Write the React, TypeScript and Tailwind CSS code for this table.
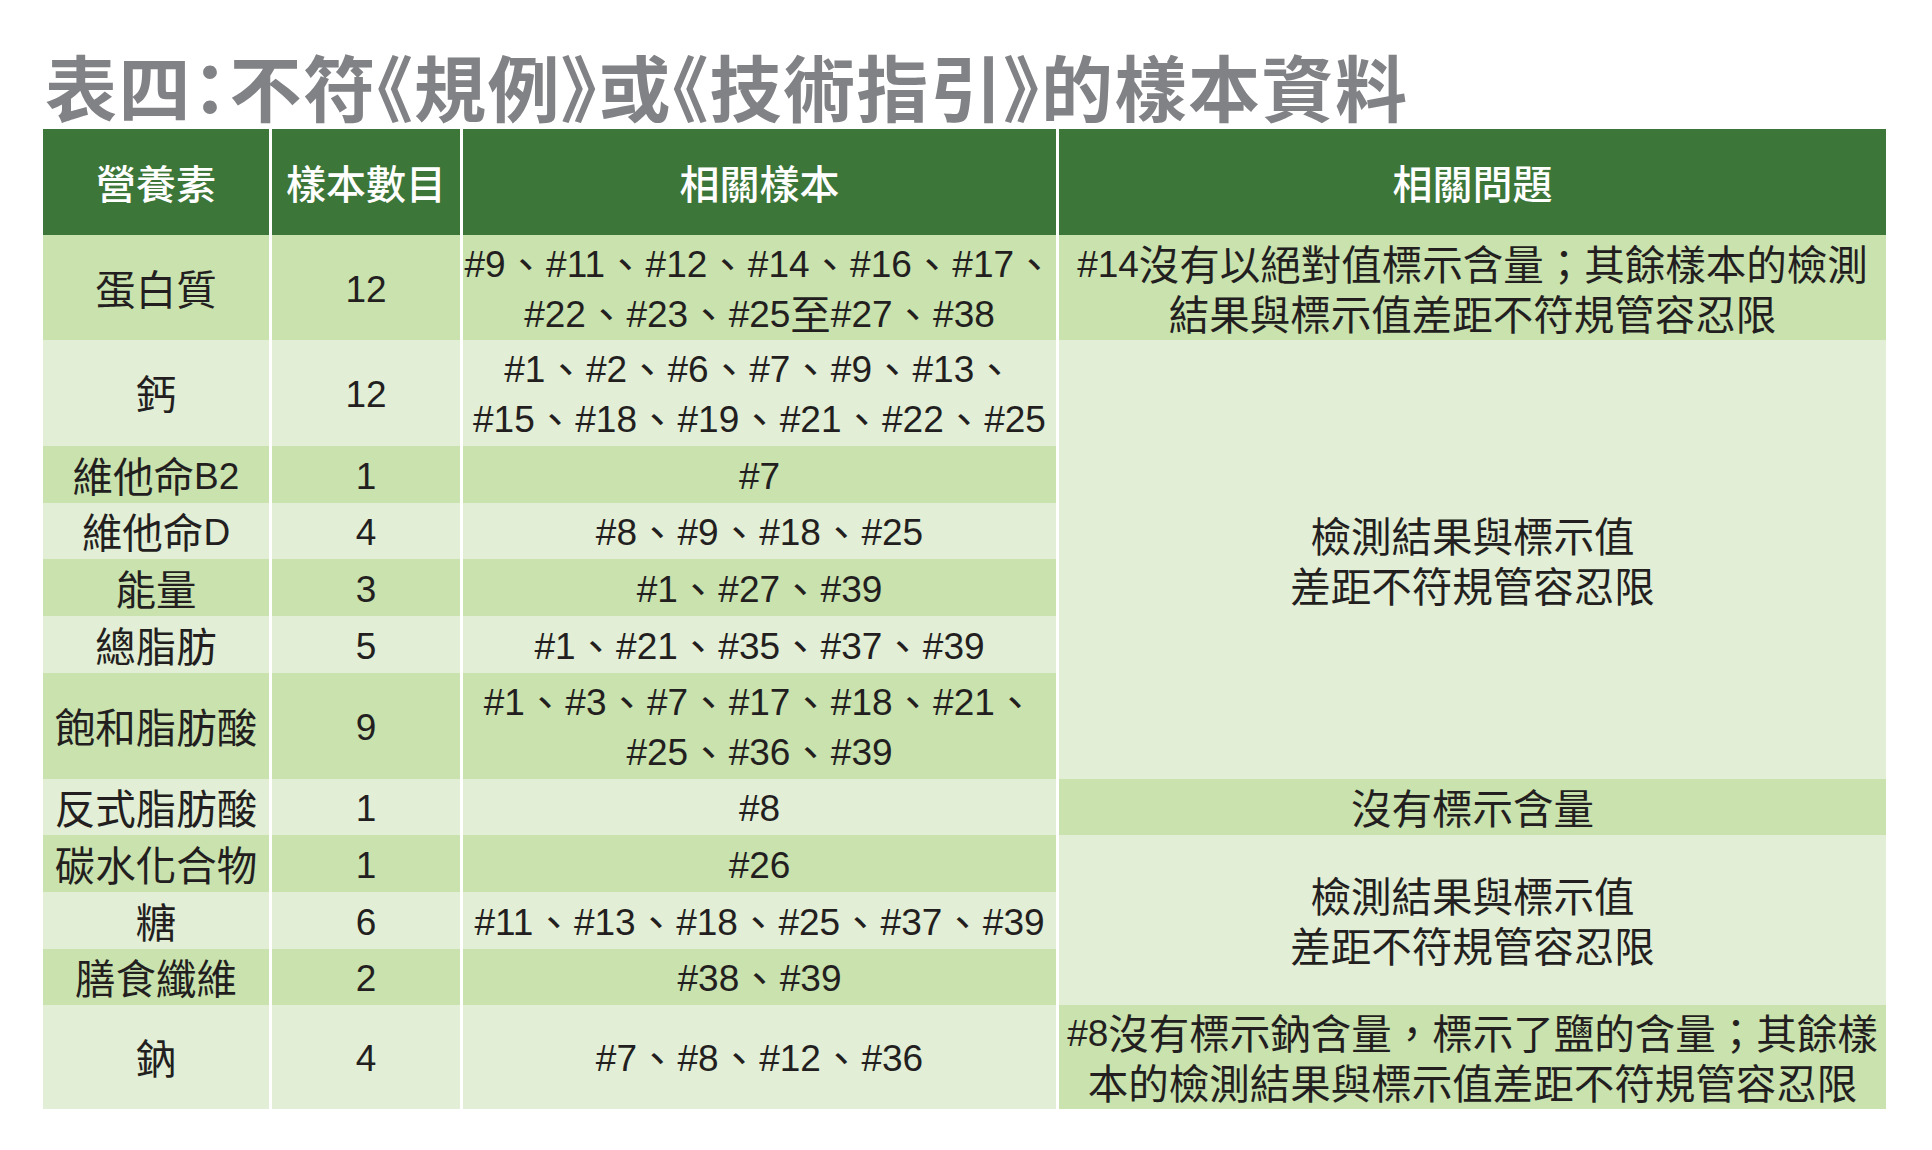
import React from 'react';

type Row = {
  nutrient: string;
  count: string;
  samples: string[];
  issue?: { lines: string[]; span?: number; dark: boolean };
};

const rows: Row[] = [
  {
    nutrient: '蛋白質',
    count: '12',
    samples: ['#9、#11、#12、#14、#16、#17、', '#22、#23、#25至#27、#38'],
    issue: {
      lines: ['#14沒有以絕對值標示含量；其餘樣本的檢測', '結果與標示值差距不符規管容忍限'],
      dark: true,
    },
  },
  {
    nutrient: '鈣',
    count: '12',
    samples: ['#1、#2、#6、#7、#9、#13、', '#15、#18、#19、#21、#22、#25'],
    issue: { lines: ['檢測結果與標示值', '差距不符規管容忍限'], span: 6, dark: false },
  },
  { nutrient: '維他命B2', count: '1', samples: ['#7'] },
  { nutrient: '維他命D', count: '4', samples: ['#8、#9、#18、#25'] },
  { nutrient: '能量', count: '3', samples: ['#1、#27、#39'] },
  { nutrient: '總脂肪', count: '5', samples: ['#1、#21、#35、#37、#39'] },
  {
    nutrient: '飽和脂肪酸',
    count: '9',
    samples: ['#1、#3、#7、#17、#18、#21、', '#25、#36、#39'],
  },
  {
    nutrient: '反式脂肪酸',
    count: '1',
    samples: ['#8'],
    issue: { lines: ['沒有標示含量'], dark: true },
  },
  {
    nutrient: '碳水化合物',
    count: '1',
    samples: ['#26'],
    issue: { lines: ['檢測結果與標示值', '差距不符規管容忍限'], span: 3, dark: false },
  },
  { nutrient: '糖', count: '6', samples: ['#11、#13、#18、#25、#37、#39'] },
  { nutrient: '膳食纖維', count: '2', samples: ['#38、#39'] },
  {
    nutrient: '鈉',
    count: '4',
    samples: ['#7、#8、#12、#36'],
    issue: {
      lines: ['#8沒有標示鈉含量，標示了鹽的含量；其餘樣', '本的檢測結果與標示值差距不符規管容忍限'],
      dark: true,
    },
  },
];

// latin runs are set a little smaller in a Helvetica-like face, lifted to sit centred with the hanzi
function Rich({ text }: { text: string }) {
  const parts = text.split(/([\x21-\x7e]+)/).filter(Boolean);
  return (
    <>
      {parts.map((p, i) =>
        /^[\x21-\x7e]+$/.test(p) ? (
          <span
            key={i}
            className="align-[3px] font-['Liberation_Sans','Noto_Sans_CJK_TC',sans-serif] text-[37px] leading-none"
          >
            {p}
          </span>
        ) : (
          <span key={i}>{p}</span>
        )
      )}
    </>
  );
}

function Cell({ lines, dark, className = '' }: { lines: string[]; dark: boolean; className?: string }) {
  return (
    <div
      className={`flex flex-col items-center justify-center whitespace-nowrap text-center leading-[50px] text-[#231f20] ${
        dark ? 'bg-[#c9e2ae]' : 'bg-[#e2eed6]'
      } ${className}`}
    >
      {lines.map((l, i) => (
        <div key={i} className="h-[50px]">
          <Rich text={l} />
        </div>
      ))}
    </div>
  );
}

export default function App() {
  const headers = ['營養素', '樣本數目', '相關樣本', '相關問題'];

  return (
    <div className="min-h-screen w-full bg-white pl-[43px] font-['Noto_Sans_CJK_TC',sans-serif]">
      <h1 className="pl-[2px] pt-[49px] text-[72px] font-bold leading-[72px] tracking-[1.5px] text-[#808285] [font-feature-settings:'palt']">
        表四：不符《規例》或《技術指引》的樣本資料
      </h1>

      <div className="mt-[8px] grid w-[1843px] grid-cols-[226px_188px_593px_827px] grid-rows-[106px_105px_106px_57px_56px_57px_57px_106px_56px_57px_57px_56px_104px] gap-x-[3px] bg-white text-[40.5px]">
        {headers.map((h) => (
          <div
            key={h}
            className="flex items-center justify-center bg-[#3d7639] text-[40px] font-medium text-white"
          >
            {h}
          </div>
        ))}

        {rows.map((r, i) => {
          const dark = i % 2 === 0;
          return (
            <React.Fragment key={r.nutrient}>
              <Cell lines={[r.nutrient]} dark={dark} />
              <Cell lines={[r.count]} dark={dark} />
              <Cell lines={r.samples} dark={dark} />
              {r.issue && (
                <Cell
                  lines={r.issue.lines}
                  dark={r.issue.dark}
                  className={r.issue.span === 6 ? 'row-span-6' : r.issue.span === 3 ? 'row-span-3' : ''}
                />
              )}
            </React.Fragment>
          );
        })}
      </div>
    </div>
  );
}
